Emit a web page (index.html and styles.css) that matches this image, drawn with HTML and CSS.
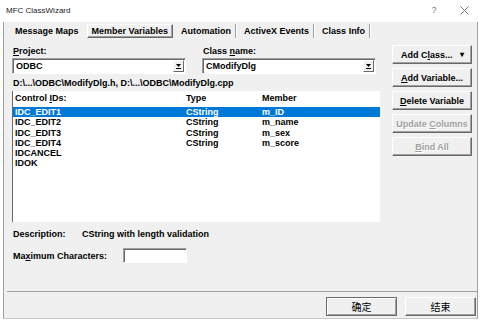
FILE: index.html
```html
<!DOCTYPE html>
<html lang="en">

<head>
    <meta charset="UTF-8">
    <meta name="viewport" content="width=device-width, initial-scale=1.0">
    <title>MFC ClassWizard</title>
    <link rel="stylesheet" href="styles.css">
</head>

<body>
    <div class="window">
        <div class="titlebar">
            <span class="title">MFC ClassWizard</span>
            <span class="tb-btn">?</span>
            <span class="tb-btn">
                <svg width="9" height="9" viewBox="0 0 9 9"><path d="M0.5 0.5L8.5 8.5M8.5 0.5L0.5 8.5" stroke="#777" stroke-width="1" fill="none"/></svg>
            </span>
        </div>
        <div class="frame">
            <div class="sheet">
                <ul class="tabs">
                    <li class="tab">Message Maps</li>
                    <li class="tab active">Member Variables</li>
                    <li class="tab sep">Automation</li>
                    <li class="tab sep">ActiveX Events</li>
                    <li class="tab sep">Class Info</li>
                </ul>
                <div class="page">
                    <div class="left">
                        <div class="fields">
                            <div class="field">
                                <label><u>P</u>roject:</label>
                                <div class="combo">
                                    <span>ODBC</span>
                                    <span class="drop"><svg width="5" height="5" viewBox="0 0 5 5"><path d="M0 0H5L2.5 3Z" fill="#000"/><path d="M0 4.5H5" stroke="#000"/></svg></span>
                                </div>
                            </div>
                            <div class="field">
                                <label>Class <u>n</u>ame:</label>
                                <div class="combo">
                                    <span>CModifyDlg</span>
                                    <span class="drop"><svg width="5" height="5" viewBox="0 0 5 5"><path d="M0 0H5L2.5 3Z" fill="#000"/><path d="M0 4.5H5" stroke="#000"/></svg></span>
                                </div>
                            </div>
                        </div>
                        <div class="path">D:\...\ODBC\ModifyDlg.h, D:\...\ODBC\ModifyDlg.cpp</div>
                        <div class="list">
                            <div class="row head">
                                <span>Control <u>I</u>Ds:</span>
                                <span>Type</span>
                                <span>Member</span>
                            </div>
                            <div class="row selected">
                                <span>IDC_EDIT1</span><span>CString</span><span>m_ID</span>
                            </div>
                            <div class="row">
                                <span>IDC_EDIT2</span><span>CString</span><span>m_name</span>
                            </div>
                            <div class="row">
                                <span>IDC_EDIT3</span><span>CString</span><span>m_sex</span>
                            </div>
                            <div class="row">
                                <span>IDC_EDIT4</span><span>CString</span><span>m_score</span>
                            </div>
                            <div class="row">
                                <span>IDCANCEL</span><span></span><span></span>
                            </div>
                            <div class="row">
                                <span>IDOK</span><span></span><span></span>
                            </div>
                        </div>
                        <div class="desc">
                            <span class="desc-label">Description:</span>
                            <span>CString with length validation</span>
                        </div>
                        <div class="maxchars">
                            <span class="max-label">Ma<u>x</u>imum Characters:</span>
                            <span class="edit"></span>
                        </div>
                    </div>
                    <div class="buttons">
                        <button class="btn split"><span>Add C<u>l</u>ass...</span><span class="caret">&#9662;</span></button>
                        <button class="btn"><u>A</u>dd Variable...</button>
                        <button class="btn"><u>D</u>elete Variable</button>
                        <button class="btn disabled">Update <u>C</u>olumns</button>
                        <button class="btn disabled"><u>B</u>ind All</button>
                    </div>
                </div>
            </div>
            <div class="footer">
                <button class="btn cjk default">确定</button>
                <button class="btn cjk">结束</button>
            </div>
        </div>
    </div>
</body>

</html>
```
FILE: styles.css
```css
/* MFC ClassWizard dialog */
* {
    box-sizing: border-box;
}

body {
    margin: 0;
    padding: 0;
    background-color: #fff;
    font-family: "Liberation Sans", Arial, sans-serif;
    font-size: 9px;
    font-weight: bold;
    color: #000;
}

.window {
    width: 481px;
    height: 322px;
    overflow: hidden;
    background-color: #fff;
}

.titlebar {
    height: 20px;
    display: flex;
    align-items: center;
    padding-left: 6px;
    padding-right: 2px;
    font-weight: normal;
}

.title {
    flex: 1;
    font-size: 8px;
    color: #1a1a1a;
}

.tb-btn {
    width: 30px;
    display: flex;
    justify-content: center;
    color: #777;
    font-size: 9px;
}

.frame {
    margin-left: 3px;
    width: 475px;
    height: 297px;
    background-color: #f0f0f0;
    border-left: 1px solid #a0a0a0;
    border-right: 1px solid #a0a0a0;
    border-bottom: 1px solid #c8c8c8;
}

.sheet {
    margin-left: 3px;
    height: 270px;
    border-bottom: 1px solid #a0a0a0;
}

.tabs {
    list-style-type: none;
    margin: 2px 0 0 0;
    padding: 0 0 0 2px;
    height: 18px;
    display: flex;
    align-items: center;
}

.tab {
    padding: 0 6px;
    line-height: 14px;
    height: 14px;
}

.tab.active {
    margin-left: 2px;
    padding: 0 4px;
    border: 1px solid;
    border-color: #fff #696969 #696969 #fff;
    box-shadow: inset -1px -1px #a0a0a0;
    line-height: 12px;
}

.tab.sep {
    margin-left: 2px;
    border-right: 1px solid #a0a0a0;
    box-shadow: 1px 0 #fff;
    padding: 0 4px 0 6px;
}

.page {
    display: flex;
    padding: 5px 0 0 5px;
    gap: 14px;
}

.left {
    width: 366px;
}

.fields {
    display: flex;
    gap: 16px;
}

.field {
    width: 174px;
}

.field label {
    display: block;
    height: 12px;
    line-height: 12px;
    padding-left: 1px;
}

.combo {
    margin-top: 1px;
    height: 16px;
    display: flex;
    align-items: center;
    padding-left: 3px;
    background-color: #fff;
    border: 1px solid;
    border-color: #a0a0a0 #fff #fff #a0a0a0;
    box-shadow: inset 1px 1px #696969;
}

.drop {
    margin-left: auto;
    margin-right: 1px;
    width: 11px;
    height: 12px;
    display: flex;
    align-items: center;
    justify-content: center;
    background-color: #f0f0f0;
    border: 1px solid;
    border-color: #fff #696969 #696969 #fff;
}

.path {
    margin-top: 4px;
    height: 11px;
    line-height: 11px;
    padding-left: 1px;
}

.list {
    margin-top: 2px;
    margin-right: -2px;
    height: 131px;
    background-color: #fff;
    border-left: 1px solid #696969;
    padding-top: 2px;
}

.row {
    display: grid;
    grid-template-columns: 171px 76px 1fr;
    padding-left: 2px;
    height: 10.3px;
    line-height: 10.3px;
}

.row.head {
    height: 14px;
    line-height: 10px;
}

.row.selected {
    background-color: #0078d7;
    color: #fff;
}

.desc {
    margin-top: 7px;
    height: 11px;
    line-height: 11px;
    display: flex;
    padding-left: 1px;
}

.desc-label {
    width: 69px;
}

.maxchars {
    margin-top: 8px;
    height: 15px;
    display: flex;
    align-items: center;
    padding-left: 1px;
}

.max-label {
    width: 110px;
}

.edit {
    width: 64px;
    height: 15px;
    background-color: #fff;
    border: 1px solid;
    border-color: #a0a0a0 #fff #fff #a0a0a0;
    box-shadow: inset 1px 1px #696969;
}

.buttons {
    display: flex;
    flex-direction: column;
    gap: 4px;
}

.btn {
    font-family: inherit;
    font-size: 9px;
    font-weight: bold;
    color: #000;
    background-color: #f0f0f0;
    border: 1px solid;
    border-color: #fff #696969 #696969 #fff;
    box-shadow: inset -1px -1px #a0a0a0;
    padding: 0;
    margin: 0;
}

.buttons .btn {
    width: 80px;
    height: 19px;
}

.btn.split {
    display: flex;
    align-items: center;
    justify-content: space-between;
    padding: 0 7px 0 8px;
}

.caret {
    font-size: 8px;
}

.btn.disabled {
    color: #a0a0a0;
    text-shadow: 1px 1px #fff;
}

.footer {
    display: flex;
    justify-content: flex-end;
    gap: 8px;
    padding-top: 5px;
    padding-right: 1px;
}

.btn.cjk {
    width: 71px;
    height: 19px;
    font-family: "Noto Sans CJK SC", sans-serif;
    font-weight: normal;
    font-size: 10px;
}

.btn.default {
    border: 1px solid #696969;
    box-shadow: inset 1px 1px #fff, inset -1px -1px #a0a0a0;
}
```
